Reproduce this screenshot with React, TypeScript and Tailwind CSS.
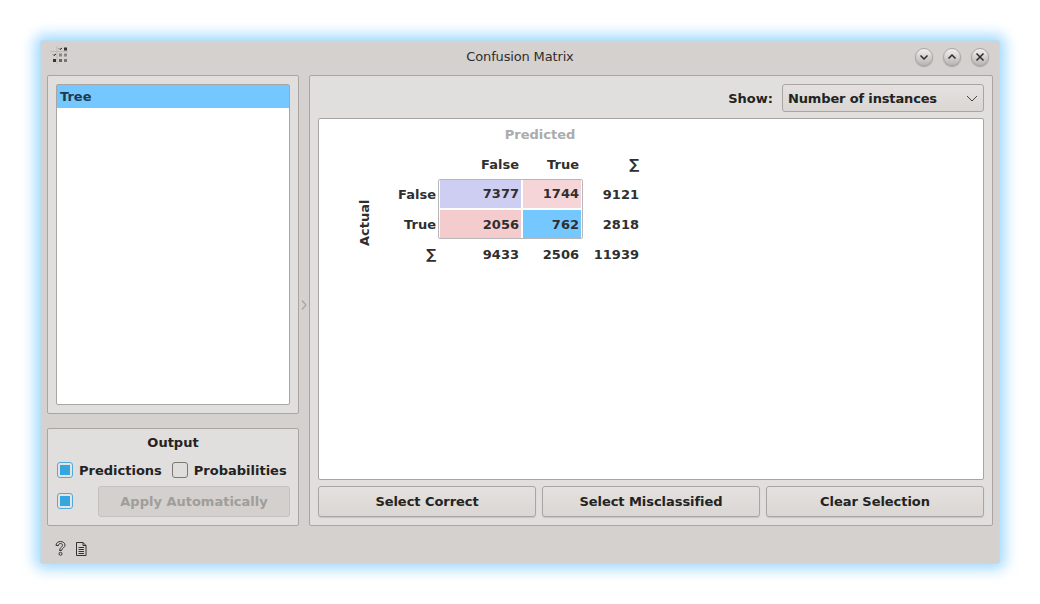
import React from 'react'

const btn = "h-[31px] rounded-[3px] border border-[#a8a5a2] bg-gradient-to-b from-[#e4e1df] to-[#d9d6d3] shadow-[0_1px_1px_rgba(0,0,0,0.12)] text-[13px] tracking-[-0.05px] font-bold text-[#232323] flex items-center justify-center"

function TitleButton({ children }: { children: React.ReactNode }) {
  return (
    <div className="w-[18px] h-[18px] rounded-full border border-[#a9a6a3] bg-gradient-to-b from-[#f2f0ef] to-[#b9b6b3] flex items-center justify-center shadow-[0_1px_1px_rgba(0,0,0,0.25)]">
      <svg width="12" height="12" viewBox="0 0 12 12" fill="none" stroke="#2b2b2b" strokeWidth="1.5">
        {children}
      </svg>
    </div>
  )
}

function Check({ checked }: { checked: boolean }) {
  return checked ? (
    <div className="w-[16px] h-[16px] mb-[2px] rounded-[3px] border border-[#52a9da] bg-[#e6e4e2] flex items-center justify-center">
      <div className="w-[10px] h-[10px] bg-[#36a6e0]" />
    </div>
  ) : (
    <div className="w-[16px] h-[16px] mb-[2px] rounded-[3px] border border-[#7b7875] bg-[#e0dedc]" />
  )
}

function AppIcon() {
  return (
    <svg width="18" height="18" viewBox="0 0 18 18" className="block">
      <path d="M0.500 5.500H18M7 0V18" stroke="#bdbab7" strokeWidth="1" fill="none" />
      <path d="M9 2.500l1 1 2-1.500M3 8.500l1 1 2-1.500" stroke="#222" strokeWidth="1" fill="none" />
      <rect x="14" y="1.500" width="3" height="3" fill="#333" />
      <rect x="3" y="13" width="3" height="3" fill="#333" />
      <rect x="9" y="7.500" width="3" height="3" fill="#888" />
      <rect x="14" y="7.500" width="3" height="3" fill="#888" />
      <rect x="9" y="13" width="3" height="3" fill="#666" />
      <rect x="14" y="13" width="3" height="3" fill="#777" />
    </svg>
  )
}

const rowLabel = "h-[30px] flex items-center justify-end"
const num = "h-[30px] flex items-center justify-end pr-[2px]"

export default function App() {
  return (
    <div className="w-[1040px] h-[604px] bg-white p-[40px] font-['DejaVu_Sans',sans-serif] text-[13px] overflow-hidden">
      <div className="w-[960px] h-[524px] flex flex-col bg-[#d5d1ce] rounded-[3px] border border-[#b9dcf3] shadow-[0_0_14px_5px_rgba(96,192,255,0.6)]">
        {/* Title bar */}
        <div className="h-[34px] shrink-0 flex items-center pl-[9px] pr-[10px] relative">
          <div className="-mt-[7px] w-[75px]"><AppIcon /></div>
          <div className="flex-1 text-center text-[#2e2e2e] tracking-[-0.15px] -mt-[3px]">Confusion Matrix</div>
          <div className="flex gap-[10px] -mt-[2px]">
            <TitleButton><path d="M2.500 4.500L6 8L9.500 4.500" /></TitleButton>
            <TitleButton><path d="M2.500 7.500L6 4L9.500 7.500" /></TitleButton>
            <TitleButton><path d="M2.500 2.500L9.500 9.500M9.500 2.500L2.500 9.500" /></TitleButton>
          </div>
        </div>

        {/* Content */}
        <div className="flex h-[451px] shrink-0 pl-[6px]">
          <div className="w-[252px] shrink-0 flex flex-col justify-between">
            <div className="h-[339px] rounded-[2px] border border-[#a8a5a2] bg-[#e1dfdd] p-[8px]">
              <div className="h-full rounded-[2px] border border-[#a8a5a2] bg-white">
                <div className="h-[23px] bg-[#75c8ff] pl-[3px] flex items-center font-bold text-[#1c3a4d]">Tree</div>
              </div>
            </div>
            <div className="h-[98px] rounded-[2px] border border-[#a8a5a2] bg-[#e1dfdd] pl-[9px] pr-[8px] pt-[5px]">
              <div className="text-center font-bold text-[#232323] h-[17px] leading-[17px] pr-[1px]">Output</div>
              <div className="flex items-center mt-[10px] h-[20px] font-bold text-[#232323]">
                <Check checked />
                <span className="ml-[6px]">Predictions</span>
                <div className="ml-[10px]"><Check checked={false} /></div>
                <span className="ml-[6px]">Probabilities</span>
              </div>
              <div className="flex items-center mt-[5px] justify-between">
                <Check checked />
                <div className="w-[192px] h-[31px] rounded-[3px] border border-[#c4c1be] bg-[#d3d0cd] flex items-center justify-center font-bold text-[#a09d9a]">
                  Apply Automatically
                </div>
              </div>
            </div>
          </div>

          {/* Splitter */}
          <div className="w-[10px] shrink-0 flex items-center justify-center">
            <svg width="6" height="10" viewBox="0 0 6 10" fill="none" stroke="#a8a5a2" strokeWidth="1.2" className="mt-[8px]">
              <path d="M1 0.500L5 5L1 9.500" />
            </svg>
          </div>

          <div className="w-[684px] shrink-0 h-full rounded-[2px] border border-[#a8a5a2] bg-[#e1dfdd] px-[8px] pt-[8px] flex flex-col">
            <div className="flex items-center justify-end h-[28px] shrink-0">
              <span className="font-bold text-[#232323] mr-[9px] pt-[1px]">Show:</span>
              <div className="w-[202px] h-[28px] rounded-[3px] border border-[#a8a5a2] bg-gradient-to-b from-[#e4e1df] to-[#d9d6d3] flex items-center justify-between pl-[5px] pr-[5px] font-bold text-[#232323]">
                <span className="pt-[1px] tracking-[-0.15px]">Number of instances</span>
                <svg width="12" height="7" viewBox="0 0 12 7" fill="none" stroke="#444" strokeWidth="1"><path d="M1 1L6 6L11 1" /></svg>
              </div>
            </div>

            <div className="h-[362px] shrink-0 mt-[6px] rounded-[2px] border border-[#a8a5a2] bg-white relative">
              <div className="ml-[37px] mt-[6px] flex">
                {/* Actual label */}
                <div className="w-[18px] mt-[53px] h-[90px] flex items-center justify-center">
                  <span className="-rotate-90 font-bold text-[#2f2f2f] whitespace-nowrap">Actual</span>
                </div>
                <div className="w-[267px]">
                  <div className="h-[18px] leading-[18px] mt-[1px] font-bold text-[#ababab] text-center pl-[65px]">Predicted</div>
                  <div className="grid grid-cols-[62px_85px_60px_60px] mt-[6px] font-bold text-[#2f2f2f] text-right">
                    <div className={rowLabel} />
                    <div className={num}>False</div>
                    <div className={num}>True</div>
                    <div className={num}>
                      <span className="text-[14px] -mt-[1px]">∑</span>
                    </div>

                    <div className={rowLabel}>False</div>
                    <div className="col-span-2 row-span-2 ml-[2px] -mt-[1px] h-[60px] border border-[#b7b7b7] rounded-[2px] px-[1px] grid grid-cols-[81px_58px] grid-rows-[28px_28px] gap-[2px] box-border w-[145px]">
                      <div className="bg-[#cecdf2] flex items-center justify-end pr-[2px]">7377</div>
                      <div className="bg-[#f5d5d7] flex items-center justify-end pr-[2px]">1744</div>
                      <div className="bg-[#f4cccd] flex items-center justify-end pr-[2px] pt-[2px]">2056</div>
                      <div className="bg-[#75c8ff] flex items-center justify-end pr-[2px] pt-[2px]">762</div>
                    </div>
                    <div className={num}>9121</div>

                    <div className={rowLabel}>True</div>
                    <div className={num}>2818</div>

                    <div className={rowLabel}>
                      <span className="text-[14px] -mt-[1px]">∑</span>
                    </div>
                    <div className={num}>9433</div>
                    <div className={num}>2506</div>
                    <div className={num}>11939</div>
                  </div>
                </div>
              </div>
            </div>

            <div className="flex gap-[6px] mt-[6px]">
              <div className={`${btn} w-[218px]`}>Select Correct</div>
              <div className={`${btn} w-[218px]`}>Select Misclassified</div>
              <div className={`${btn} w-[218px]`}>Clear Selection</div>
            </div>
          </div>
        </div>

        {/* Footer */}
        <div className="flex items-center gap-[9px] pl-[14px] pt-[15px]">
          <svg width="11" height="15" viewBox="0 0 11 15" fill="none" stroke="#333" strokeWidth="1">
            <path d="M1 4.500C1 2 3 0.500 5.500 0.500S10 2 10 4.300C10 6.500 7 7 6.500 9.500H4.500C4.800 6.500 7.500 5.800 7.500 4.300C7.500 3.200 6.700 2.500 5.500 2.500C4.300 2.500 3.500 3.200 3.500 4.500Z" />
            <circle cx="5.500" cy="12.800" r="1.500" />
          </svg>
          <svg width="12" height="14" viewBox="0 0 12 14" fill="none" stroke="#333" strokeWidth="1">
            <path d="M1.500 0.500H8L11 3.500V13.500H1.500Z" />
            <path d="M8 0.500V3.500H11M3.500 5.500H9M3.500 7.500H9M3.500 9.500H9M3.500 11.500H9" />
          </svg>
        </div>
      </div>
    </div>
  )
}
